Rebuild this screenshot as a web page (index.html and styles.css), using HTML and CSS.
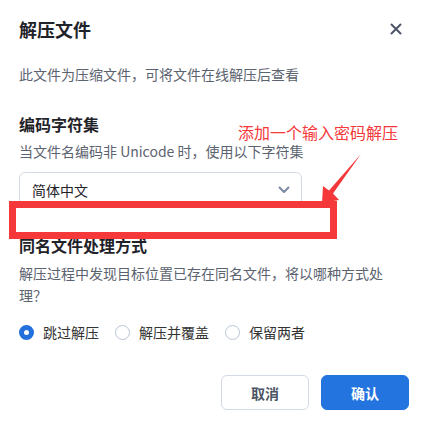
FILE: index.html
```html
<!DOCTYPE html>
<html lang="zh-CN">
<head>
    <meta charset="UTF-8">
    <title>解压文件</title>
    <link rel="stylesheet" href="styles.css">
</head>
<body>
    <div class="dialog">
        <div class="header">
            <h2 class="title">解压文件</h2>
            <button class="close" type="button">
                <svg width="12" height="12" viewBox="0 0 12 12"><path d="M1.5 1.5 L10.5 10.5 M10.5 1.5 L1.5 10.5" stroke="#4d5669" stroke-width="2" stroke-linecap="round"/></svg>
            </button>
        </div>
        <p class="intro">此文件为压缩文件，可将文件在线解压后查看</p>

        <h3 class="section-title first">编码字符集</h3>
        <p class="hint">当文件名编码非 Unicode 时，使用以下字符集</p>
        <div class="select">
            <span>简体中文</span>
            <svg width="12" height="8" viewBox="0 0 12 8"><path d="M1.5 1.5 L6 6 L10.5 1.5" fill="none" stroke="#7b8aa3" stroke-width="2" stroke-linecap="round" stroke-linejoin="round"/></svg>
        </div>

        <h3 class="section-title second">同名文件处理方式</h3>
        <p class="desc">解压过程中发现目标位置已存在同名文件，将以哪种方式处理？</p>
        <div class="radios">
            <label class="radio"><span class="dot checked"></span>跳过解压</label>
            <label class="radio"><span class="dot"></span>解压并覆盖</label>
            <label class="radio"><span class="dot"></span>保留两者</label>
        </div>

        <div class="footer">
            <button class="btn cancel" type="button">取消</button>
            <button class="btn confirm" type="button">确认</button>
        </div>

        <!-- annotation -->
        <div class="mark-box"></div>
        <div class="mark-text">添加一个输入密码解压</div>
        <svg class="mark-arrow" width="423" height="437" viewBox="0 0 423 437">
            <polygon points="361,154 333,193.5 339,200 322,203 323,186 329,190.5" fill="#f5383a"/>
        </svg>
    </div>
</body>
</html>
```

FILE: styles.css
```css
body {
    margin: 0;
    background-color: #fff;
    font-family: "Noto Sans CJK SC", "Noto Sans", sans-serif;
}
.dialog {
    position: relative;
    width: 423px;
    height: 435px;
    box-sizing: border-box;
    padding: 0 14px 0 19px;
    background-color: #fff;
    box-shadow: 0 1px 2px rgba(0, 0, 0, 0.18);
}
.header {
    display: flex;
    justify-content: space-between;
    align-items: center;
    padding-top: 16px;
    padding-right: 7px;
}
.title {
    margin: 0;
    font-size: 18px;
    line-height: 26px;
    font-weight: bold;
    color: #1f2329;
}
.close {
    border: none;
    background: none;
    padding: 0;
    width: 12px;
    height: 12px;
    display: flex;
}
.intro {
    margin: 21px 0 0;
    font-size: 14px;
    line-height: 22px;
    color: #5c6370;
}
.section-title {
    margin: 0;
    font-size: 16px;
    line-height: 24px;
    font-weight: bold;
    color: #1f2329;
}
.section-title.first {
    margin-top: 27px;
}
.section-title.second {
    margin-top: 25px;
}
.hint {
    margin: 5px 0 0;
    font-size: 14px;
    line-height: 20px;
    color: #5c6370;
}
.select {
    margin-top: 11px;
    width: 283px;
    height: 36px;
    box-sizing: border-box;
    border: 1px solid #d3dae4;
    border-radius: 6px;
    padding: 0 11px 0 12px;
    display: flex;
    justify-content: space-between;
    align-items: center;
    font-size: 14px;
    color: #1f2329;
}
.desc {
    margin: 5px 0 0;
    max-width: 372px;
    font-size: 14px;
    line-height: 22px;
    color: #5c6370;
}
.radios {
    display: flex;
    gap: 16px;
    margin-top: 16px;
}
.radio {
    display: flex;
    align-items: center;
    gap: 9px;
    font-size: 14px;
    line-height: 20px;
    color: #333;
}
.dot {
    width: 15px;
    height: 15px;
    box-sizing: border-box;
    border: 1px solid #b8c4d6;
    border-radius: 50%;
}
.dot.checked {
    border: 5px solid #2371dc;
}
.footer {
    display: flex;
    justify-content: flex-end;
    gap: 12px;
    margin-top: 33px;
}
.btn {
    width: 88px;
    height: 35px;
    border-radius: 6px;
    font-family: inherit;
    font-size: 14px;
    font-weight: bold;
    cursor: pointer;
}
.cancel {
    background-color: #fff;
    border: 1px solid #d3dae4;
    color: #4b5565;
}
.confirm {
    background-color: #2474df;
    border: 1px solid #2474df;
    color: #fff;
}
.mark-box {
    position: absolute;
    left: 9px;
    top: 201px;
    width: 328px;
    height: 38px;
    box-sizing: border-box;
    border: 7px solid #f5383a;
    background-color: #fff;
}
.mark-text {
    position: absolute;
    left: 238px;
    top: 122px;
    font-size: 16px;
    line-height: 20px;
    color: #f5383a;
}
.mark-arrow {
    position: absolute;
    left: 0;
    top: 0;
    pointer-events: none;
}
```
